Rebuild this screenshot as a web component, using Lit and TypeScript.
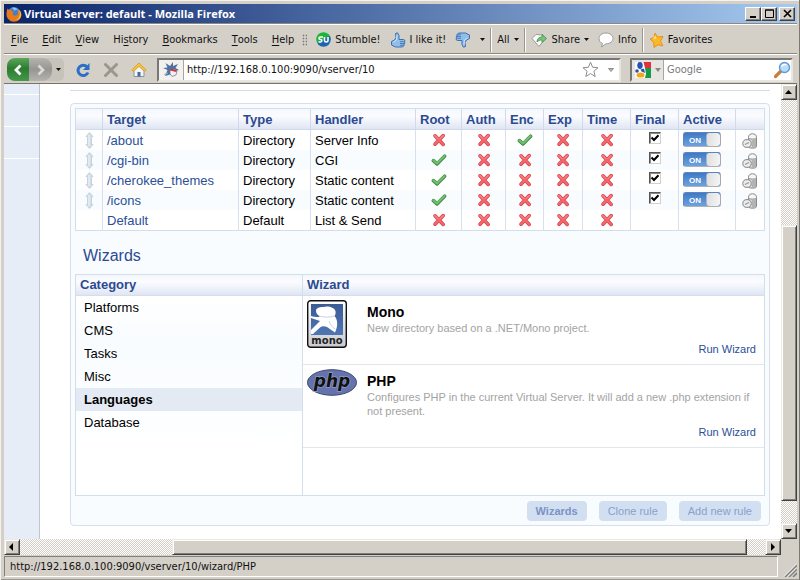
import { LitElement, html, css, svg, nothing } from "lit";
import { customElement, property } from "lit/decorators.js";
import { classMap } from "lit/directives/class-map.js";

interface Rule {
  target: string;
  type: string;
  handler: string;
  flags: boolean[];
  fixed?: boolean;
}

const FLAGS = ["Root", "Auth", "Enc", "Exp", "Time"];

const RULES: Rule[] = [
  { target: "/about", type: "Directory", handler: "Server Info", flags: [false, false, true, false, false] },
  { target: "/cgi-bin", type: "Directory", handler: "CGI", flags: [true, false, false, false, false] },
  { target: "/cherokee_themes", type: "Directory", handler: "Static content", flags: [true, false, false, false, false] },
  { target: "/icons", type: "Directory", handler: "Static content", flags: [true, false, false, false, false] },
  { target: "Default", type: "Default", handler: "List & Send", flags: [false, false, false, false, false], fixed: true },
];

const CATEGORIES = ["Platforms", "CMS", "Tasks", "Misc", "Languages", "Database"];

const MENUS: [string, string, string][] = [
  ["", "F", "ile"],
  ["", "E", "dit"],
  ["", "V", "iew"],
  ["Hi", "s", "tory"],
  ["", "B", "ookmarks"],
  ["", "T", "ools"],
  ["", "H", "elp"],
];

const caret = html`<svg class="caret" width="5" height="3" viewBox="0 0 5 3"><path d="M0 0h5L2.500 3z" fill="#111" /></svg>`;

const thumb = svg`
  <path d="M1.500 9.500 4.500 8 6 5.500 5.500 1.500 7.500.8 9 3.500 9 7.500 13.500 7.500 15 8.500 14.500 9.800 15 11 14 12 14 13.500 12.500 15 5.500 15 1.500 13z" fill="#8fbfe8" stroke="#3f6fae" stroke-linejoin="round" />
  <path d="M10 9.700h4.500M10 11.500h4.500M10 13.300h4" stroke="#4a7fbc" fill="none" />
  <path d="M3.500 10 6.500 8 7 3" stroke="#cfe6fa" fill="none" />`;

const cross = html`<svg class="mark" role="img" aria-label="No" width="14" height="14" viewBox="0 0 14 14">
  <path d="M3 2.800 11.200 11.400M11.200 2.600 3 11.200" stroke="#d8404a" stroke-width="3.600" stroke-linecap="round" />
  <path d="M3 2.800 11.200 11.400M11.200 2.600 3 11.200" stroke="#f2656a" stroke-width="2.400" stroke-linecap="round" />
  <path d="M3 2.500 6 5.600M11 2.500 8.200 5.400" stroke="#fb9596" stroke-width="1" stroke-linecap="round" />
</svg>`;

const check = html`<svg class="mark" role="img" aria-label="Yes" width="16" height="14" viewBox="0 0 16 14">
  <path d="M2.400 7.600 6 10.900 13.600 3.200" fill="none" stroke="#3f8b44" stroke-width="3.500" stroke-linecap="round" stroke-linejoin="round" />
  <path d="M2.400 7.400 6 10.500 13.500 3" fill="none" stroke="#74bf70" stroke-width="2" stroke-linecap="round" stroke-linejoin="round" />
</svg>`;

const drag = html`<svg class="mark" width="9" height="17" viewBox="0 0 9 17">
  <path d="M4.500 .5 8 4.500H6.500v8H8L4.500 16.500 1 12.500h1.500v-8H1z" fill="#d3dfe8" stroke="#bccbd7" stroke-width=".8" />
  <path d="M4 3v11" stroke="#eef4f8" />
</svg>`;

const trash = html`<svg width="16" height="16" viewBox="0 0 16 16">
  <path d="M6.500 4.500C6.500 2 8 .8 10.500 .8S14.500 2 14.500 4.500v9c0 1-1.600 1.700-4 1.700s-4-.7-4-1.700z" fill="#d9d9d9" stroke="#8a8a8a" />
  <path d="M7 4.800C7.200 2.300 8.500 1.500 10.500 1.500S13.800 2.500 14 4.800c-2 1-5 1-7 0z" fill="#f6f6f6" />
  <path d="M6.800 5.500c2 .9 5.500.9 7.500 0" fill="none" stroke="#9a9a9a" />
  <path d="M13 6.500v7.500M11 7v7.500" stroke="#9a9a9a" stroke-width="1.200" />
  <ellipse cx="5" cy="10.500" rx="4.200" ry="3.900" fill="#ececec" stroke="#858585" />
  <path d="M3 11.500 7 9.500" stroke="#999" stroke-width="1.300" />
</svg>`;

@customElement("rule-table")
export class RuleTable extends LitElement {
  static styles = css`
    :host { display: block; }
    .rules { width: 100%; table-layout: fixed; border-collapse: separate; border-spacing: 0; border: 1px solid #d3deeb; font-size: 13px; line-height: 18px; background: #fff; }
    th, td { box-sizing: border-box; }
    th { height: 21px; padding: 2px 4px 0; text-align: left; color: #2b4a91; border-left: 1px solid #d0daea; border-bottom: 1px solid #cfd9e9; background: linear-gradient(#f4f7fc, #fbfcff 35%, #dfe6f3); }
    td { height: 20px; padding: 2px 4px 0; border-left: 1px solid #d6e0ef; color: #000; white-space: nowrap; vertical-align: top; }
    tr > :first-child { border-left: 0; }
    .even td { background: #f8fcff; }
    .mid { text-align: center; padding: 0; vertical-align: middle; }
    .mark { display: block; margin: 0 auto; }
    a { color: #2b4f97; text-decoration: none; }
    .grip { width: 26px; }
    .type { width: 72px; }
    .handler { width: 105px; }
    .root { width: 46px; }
    .auth { width: 44px; }
    .enc { width: 38px; }
    .exp { width: 39px; }
    .time, .final { width: 48px; }
    .active { width: 57px; }
    .del { width: 29px; }
    .tick { display: block; width: 12px; height: 12px; margin: 0 auto 4px; appearance: none; background: #fff; border: 1px solid; border-color: #555 #d4d0c8 #d4d0c8 #555; box-shadow: inset 1px 1px #888; }
    .tickbox { display: block; position: relative; }
    .tickmark { position: absolute; left: 50%; top: 2px; margin-left: -4px; pointer-events: none; }
    .toggle { display: flex; align-items: stretch; width: 38px; height: 15px; box-sizing: border-box; border: 1px solid; border-color: #5c83be #a8a8a8 #b0b0b0 #5c83be; border-radius: 3px; background: linear-gradient(#3f79c4, #6da2e0); overflow: hidden; position: relative; }
    .toggle input { position: absolute; inset: 0; margin: 0; opacity: 0; }
    .on { width: 22px; color: #fff; font-size: 8px; line-height: 15px; font-weight: bold; text-align: center; }
    .knob { flex: 1; border-radius: 3px; border-left: 1px solid #a9b6c8; background: linear-gradient(100deg, #dedede, #f6f6f6); }
    .bin { display: flex; width: 16px; height: 16px; padding: 0; margin: 1px 6px 0; border: 0; background: none; }
  `;

  render() {
    return html`<table class="rules">
      <thead>
        <tr>
          <th class="grip"></th>
          <th>Target</th>
          <th class="type">Type</th>
          <th class="handler">Handler</th>
          ${FLAGS.map((f) => html`<th class=${f.toLowerCase()}>${f}</th>`)}
          <th class="final">Final</th>
          <th class="active">Active</th>
          <th class="del"></th>
        </tr>
      </thead>
      <tbody>
        ${RULES.map(
          (r, i) => html`<tr class=${classMap({ even: i % 2 === 1 })}>
            <td class="mid">${r.fixed ? nothing : drag}</td>
            <td><a href="#">${r.target}</a></td>
            <td>${r.type}</td>
            <td>${r.handler}</td>
            ${r.flags.map((on) => html`<td class="mid">${on ? check : cross}</td>`)}
            <td class="mid">
              ${r.fixed
                ? nothing
                : html`<label class="tickbox">
                    <input class="tick" type="checkbox" checked aria-label="Final: ${r.target}" />
                    <svg class="tickmark" width="8" height="8" viewBox="0 0 8 8"><path d="M.5 3.500 3 6 7.500 1.200" fill="none" stroke="#000" stroke-width="2" /></svg>
                  </label>`}
            </td>
            <td>
              ${r.fixed
                ? nothing
                : html`<label class="toggle">
                    <input type="checkbox" checked aria-label="Active: ${r.target}" />
                    <span class="on">ON</span><span class="knob"></span>
                  </label>`}
            </td>
            <td class="mid">${r.fixed ? nothing : html`<button class="bin" aria-label="Delete ${r.target}">${trash}</button>`}</td>
          </tr>`,
        )}
      </tbody>
    </table>`;
  }
}

@customElement("wizard-picker")
export class WizardPicker extends LitElement {
  @property() selected = "Languages";

  static styles = css`
    :host { display: grid; grid-template-columns: 226px 1fr; min-height: 222px; border: 1px solid #d3deeb; box-sizing: border-box; background: #fff; font-size: 13px; }
    .cats { background: linear-gradient(#fff 20px, #f8fcff 30%, #fff 80%); }
    .pane { border-left: 1px solid #d3deeb; }
    .head { margin: 0; height: 20px; padding: 0 4px; border-bottom: 1px solid #d5deec; font-size: 13px; line-height: 20px; color: #2b4a91; background: linear-gradient(#f4f7fc, #fbfcff 35%, #dfe6f3); }
    .cat { display: block; width: 100%; height: 23px; padding: 0 8px; border: 0; background: none; text-align: left; font: 13px "Liberation Sans", Arial, sans-serif; color: #000; }
    .picked { background: #e4eaf4; font-weight: bold; }
    .wiz { display: grid; grid-template-columns: 60px 1fr; padding: 4px 8px 8px 4px; border-bottom: 1px solid #e2e7ee; }
    .name { margin: 4px 0 0; font-size: 14px; line-height: 17px; color: #000; }
    .desc { margin: 0; font-size: 11px; line-height: 14px; color: #a3a3a3; }
    .run { justify-self: end; grid-column: 2; margin-top: 7px; font-size: 11px; line-height: 14px; color: #2b4f97; text-decoration: none; }
    .logo { grid-row: span 2; display: block; }
    .mono-text { font: bold 10px "DejaVu Sans", sans-serif; }
    .php-text { font: italic bold 17px "DejaVu Sans", sans-serif; }
  `;

  render() {
    return html`
      <div class="cats">
        <h3 class="head">Category</h3>
        ${CATEGORIES.map((c) => html`<button class=${classMap({ cat: true, picked: c === this.selected })}>${c}</button>`)}
      </div>
      <div class="pane">
        <h3 class="head">Wizard</h3>
        <article class="wiz">
          <svg class="logo" width="40" height="48" viewBox="0 0 40 48">
            <defs><linearGradient id="m" x2="0" y2="1"><stop stop-color="#fff" /><stop offset="1" stop-color="#c9cbd0" /></linearGradient>
            <linearGradient id="b" x2="0" y2="1"><stop stop-color="#3b5b95" /><stop offset="1" stop-color="#4f76b4" /></linearGradient></defs>
            <rect x=".7" y=".7" width="38.600" height="46.600" rx="3" fill="url(#m)" stroke="#111" stroke-width="1.400" />
            <rect x="4" y="4" width="32" height="31" fill="url(#b)" />
            <path d="M9 11C9 8 12 7 16 7c5-1.500 11 0 12.500 4 .5 3-.5 4-1 5 3 3 3.500 9 1.500 14l-1 2.500-8-5.500c-3-1-5-1-7 .500L6 34H4v-4l9-9-9-3v-2c3 1 6 1.500 9 .500-2-1-4-3-4-5.500z" fill="#fff" />
            <path d="M12 16c5 1.500 11 1.500 15 0M22 21c1 3 3 6 6 8" fill="none" stroke="#b9c6dc" stroke-width=".8" />
            <text class="mono-text" x="20" y="44" text-anchor="middle" fill="#222">mono</text>
          </svg>
          <div><h4 class="name">Mono</h4><p class="desc">New directory based on a .NET/Mono project.</p></div>
          <a class="run" href="#">Run Wizard</a>
        </article>
        <article class="wiz">
          <svg class="logo" width="50" height="27" viewBox="0 0 50 27">
            <ellipse cx="25" cy="13.500" rx="24.500" ry="12.800" fill="#6473ab" stroke="#3d4778" />
            <text class="php-text" x="25" y="18" text-anchor="middle" fill="#111" stroke="#8f9bc8" stroke-width="1.500" paint-order="stroke">php</text>
          </svg>
          <div><h4 class="name">PHP</h4><p class="desc">Configures PHP in the current Virtual Server. It will add a new .php extension if not present.</p></div>
          <a class="run" href="#">Run Wizard</a>
        </article>
      </div>`;
  }
}

@customElement("app-root")
export class AppRoot extends LitElement {
  static styles = css`
    :host { display: flex; flex-direction: column; box-sizing: border-box; min-height: 100vh; padding: 4px 2px 3px 4px; background: #d4d0c8; border-right: 1px solid #7b7974; box-shadow: inset 1px 1px #f4f2ee, inset 0 -1px #9a978f; font-family: "Liberation Sans", Arial, sans-serif; color: #111; }
    svg { display: block; flex: none; }
    button { font: inherit; color: inherit; }
    .chrome { font-family: "DejaVu Sans Condensed", "DejaVu Sans", sans-serif; font-size: 11px; font-stretch: condensed; }
    .title { display: flex; align-items: center; height: 19px; padding: 0 2px; background: linear-gradient(90deg, #0a246a, #a6caf0); color: #fff; }
    .title h1 { flex: 1; margin: 0 0 0 2px; font: bold 11px "Open Sans", sans-serif; line-height: 18px; }
    .win { width: 16px; height: 14px; padding: 0; display: grid; place-items: center; border: 1px solid; border-color: #fff #404040 #404040 #fff; background: #d4d0c8; box-shadow: inset -1px -1px #808080; }
    .close { margin-left: 2px; }
    .bar { display: flex; align-items: center; box-sizing: border-box; height: 30px; padding-top: 2px; border-top: 1px solid #8c8981; box-shadow: inset 0 1px #fff; }
    .menu { display: flex; gap: 14px; padding: 0 8px 0 7px; }
    .menu button, .tool { display: flex; align-items: center; gap: 4px; border: 0; padding: 0; background: none; white-space: nowrap; }
    .menu button { gap: 0; }
    .menu u { text-underline-offset: 2px; }
    .grip { width: 5px; height: 12px; margin-right: 9px; background: radial-gradient(circle, #777 40%, transparent 50%) 0 0 / 3px 3px; }
    .tools { display: flex; align-items: center; gap: 9px; }
    .sep { width: 1px; height: 24px; background: #98958d; border-right: 1px solid #fff; }
    .snug { margin: 0 -4px; }
    .nav { height: 30px; padding-left: 3px; }
    .round { display: flex; width: 57px; height: 23px; background: #c6c3bb; border-radius: 8px 5px 5px 8px; overflow: hidden; }
    .round button { padding: 0; border: 0; display: grid; place-items: center; }
    .back { width: 22px; background: linear-gradient(#5ba65c, #2b7d30 45%, #43994a); }
    .fwd { width: 23px; background: linear-gradient(#b5b3ae, #989692 50%, #b5b3ae); border-radius: 0 9px 9px 0; }
    .hist { width: 12px; background: none; }
    .icons { display: flex; gap: 12px; margin: 0 10px 0 11px; }
    .icons button { padding: 0; border: 0; background: none; }
    .field { display: flex; align-items: center; box-sizing: border-box; height: 24px; border: 2px solid; border-color: #777 #e8e6e1 #e8e6e1 #777; background: #fff; }
    .url { flex: 1; }
    .search { width: 163px; margin: 0 4px 0 9px; }
    .site { display: grid; place-items: center; align-self: stretch; width: 24px; background: #f2f1ee; border-right: 1px solid #a9a69f; }
    .engine { display: flex; align-items: center; justify-content: center; gap: 4px; align-self: stretch; width: 32px; padding: 0; border: 0; border-right: 1px solid #a9a69f; background: #e6e4df; }
    .field input { flex: 1; min-width: 0; border: 0; padding: 0 3px; outline: 0; background: none; font: inherit; color: #111; }
    .search input::placeholder { color: #7b7b7b; opacity: 1; }
    .star { margin-right: 9px; }
    .drop { margin-right: 5px; }
    .view { flex: 1; display: grid; grid-template-columns: 1fr 16px; grid-template-rows: 1fr 16px; border-top: 1px solid #77746d; }
    .page { display: grid; grid-template-columns: 36px 1fr; background: #fff; overflow: hidden; }
    .side { border-right: 1px solid #bfc6d2; background: #e6edf6; }
    .slot { height: 31px; border-bottom: 1px solid #fff; }
    .first { height: 10px; }
    .main { padding: 6px 11px 12px 30px; }
    .rule { height: 0; margin: 0 0 12px; border: 0; border-top: 1px solid #d9dee6; }
    .panel { padding: 4px; border: 1px solid #d7e0ea; border-radius: 4px; background: #f8fcff; }
    .panel h2 { margin: 15px 8px 8px; font-size: 16px; line-height: 20px; font-weight: normal; color: #2b4a91; }
    .acts { display: flex; justify-content: flex-end; gap: 12px; padding: 5px 4px 0; }
    .acts button { height: 20px; padding: 0 9px; border: 0; border-radius: 4px; background: #d2dff1; color: #8ba0cb; font: 11px "Liberation Sans", Arial, sans-serif; }
    .acts .strong { font-weight: bold; color: #7b93c4; }
    .sb { display: flex; background: repeating-conic-gradient(#fff 0 25%, #d4d0c8 0 50%) 0 0 / 2px 2px; }
    .vert { flex-direction: column; }
    .sb button, .thumb { box-sizing: border-box; border: 1px solid; border-color: #eceae5 #404040 #404040 #eceae5; box-shadow: inset 1px 1px #fff, inset -1px -1px #808080; background: #d4d0c8; padding: 0; }
    .sb button { flex: 0 0 16px; display: grid; place-items: center; }
    .lead-v { flex: 126; }
    .thumb-v { flex: 275; }
    .tail-v { flex: 22; }
    .lead-h { flex: 152; }
    .thumb-h { flex: 575; }
    .tail-h { flex: 18; }
    .status { display: flex; align-items: stretch; height: 21px; padding-top: 1px; }
    .msg { flex: 1; padding: 0 5px; line-height: 20px; border: 1px solid; border-color: #808080 #fff #fff #808080; }
    .size { align-self: flex-end; margin-left: 5px; }
  `;

  private arrow(label: string, d: string) {
    return html`<button aria-label=${label}><svg width="8" height="8" viewBox="0 0 8 8"><path d=${d} fill="#000" /></svg></button>`;
  }

  render() {
    return html`
      <header class="chrome">
        <div class="title">
          <svg width="16" height="16" viewBox="0 0 16 16">
            <circle cx="8" cy="7.500" r="6.500" fill="#3d7fd0" />
            <path d="M6 2c2-1 5 0 6 2-2-.5-3 0-3 1z" fill="#8fc4f0" />
            <path d="M1.500 2.500 3 4l2-1 .5 2L8 6 6.500 7.500C7 10 10 10 11.500 8.500c1-1.500.5-3.500-.5-5 3 1 4.500 3.500 4.300 6C14.800 13 12 15.700 8 15.700S.5 12.500.5 8.500C.5 6 1 4 1.500 2.500z" fill="#e8791c" />
            <path d="M12 3.500c3 3 2.500 8-2 10.500 4-.5 5.800-3.500 5-7-.4-2-1.500-3-3-3.500z" fill="#f9c440" />
          </svg>
          <h1>Virtual Server: default - Mozilla Firefox</h1>
          <button class="win" aria-label="Minimize"><svg width="9" height="9" viewBox="0 0 9 9"><path d="M1 7h6v2H1z" /></svg></button>
          <button class="win" aria-label="Maximize"><svg width="9" height="9" viewBox="0 0 9 9"><path d="M.5 1h8v7.500h-8zM0 1h9" fill="none" stroke="#000" /></svg></button>
          <button class="win close" aria-label="Close"><svg width="9" height="9" viewBox="0 0 9 9"><path d="m1 1 7 7M8 1 1 8" stroke="#000" stroke-width="1.600" /></svg></button>
        </div>
        <div class="bar">
          <nav class="menu">${MENUS.map(([a, k, b]) => html`<button>${a}<u>${k}</u>${b}</button>`)}</nav>
          <span class="grip"></span>
          <div class="tools">
            <button class="tool">
              <svg width="15" height="15" viewBox="0 0 15 15"><defs><linearGradient id="su" x1=".2" x2=".8" y2="1"><stop offset=".45" stop-color="#1fb53a" /><stop offset=".55" stop-color="#1c63b0" /></linearGradient></defs>
                <circle cx="7.500" cy="7.500" r="7.300" fill="url(#su)" />
                <path d="M7 5H4.500C2.500 5 2.500 7.500 4.500 7.500S6 10 4.500 10H2.500M8.500 5v3.500C8.500 10.500 12 10.500 12 8.500V5" fill="none" stroke="#fff" stroke-width="1.600" />
              </svg>Stumble!</button>
            <button class="tool"><svg width="16" height="16" viewBox="0 0 16 16">${thumb}</svg>I like it!</button>
            <button class="tool" aria-label="Dislike"><svg width="16" height="16" viewBox="0 0 16 16"><g transform="rotate(180 8 8)">${thumb}</g></svg></button>
            ${caret}
            <span class="sep snug"></span>
            <button class="tool">All ${caret}</button>
            <span class="sep snug"></span>
            <button class="tool">
              <svg width="17" height="16" viewBox="0 0 17 16"><path d="M1 6.500 5 2.500l7 .5 2 4-6 7.500z" fill="#fafafa" stroke="#999" /><path d="M6 10c0-3 2-5 5-5V2.500l4.500 4-4.500 4V8c-2 0-3.500.5-5 2z" fill="#7cc47c" stroke="#3f8f4a" stroke-width=".8" /></svg>
              Share ${caret}</button>
            <button class="tool">
              <svg width="16" height="16" viewBox="0 0 16 16"><path d="M8 1C4 1 1 3.300 1 6.500c0 2.400 1.500 4.200 3.500 5L3.500 15l4.500-3.200c4 0 7-2.200 7-5.300S12 1 8 1z" fill="#fff" stroke="#9b9b9b" /></svg>
              Info</button>
            <span class="sep snug"></span>
            <button class="tool">
              <svg width="15" height="16" viewBox="0 0 15 16"><path d="M6 1l2.500 4L14 4.500l-2.500 4.700L14 14l-5-1.300L5 15.500 4.800 10.500 1 7l4-1.500z" fill="#fdb823" stroke="#e0951f" stroke-linejoin="round" /><path d="M6 3.500 7.500 6.500 4 7" fill="#ffe587" /></svg>
              Favorites</button>
          </div>
        </div>
        <div class="bar nav">
          <div class="round">
            <button class="back" aria-label="Back"><svg width="10" height="12" viewBox="0 0 10 12"><path d="M7.500 1.500 3 6l4.500 4.500" fill="none" stroke="#fff" stroke-width="2.800" /></svg></button>
            <button class="fwd" aria-label="Forward"><svg width="10" height="12" viewBox="0 0 10 12"><path d="M2.500 1.500 7 6l-4.500 4.500" fill="none" stroke="#dcdad6" stroke-width="2.600" /></svg></button>
            <button class="hist" aria-label="History">${caret}</button>
          </div>
          <div class="icons">
            <button aria-label="Reload"><svg width="16" height="16" viewBox="0 0 16 16"><path d="M12 4.800A5.200 5.200 0 1 0 13 10.500" fill="none" stroke="#2c6fc9" stroke-width="3" /><path d="M14.500 1v7H8z" fill="#2c6fc9" /></svg></button>
            <button aria-label="Stop"><svg width="16" height="16" viewBox="0 0 16 16"><path d="m2.500 2.500 11 11M13.500 2.500l-11 11" stroke="#9a978f" stroke-width="3" stroke-linecap="round" /></svg></button>
            <button aria-label="Home"><svg width="16" height="16" viewBox="0 0 16 16"><path d="M3 8v6.500h10V8L8 3.500z" fill="#f2f4f8" stroke="#8b93a0" /><path d="M8 1 .8 8l1.500 1.500L8 4.500l5.700 5L15.200 8z" fill="#f8c13a" stroke="#d79b22" stroke-width=".8" /><path d="M6.500 10h3v4.500h-3z" fill="#3f6ea8" /></svg></button>
          </div>
          <div class="field url">
            <span class="site"><svg width="18" height="17" viewBox="0 0 18 17"><path d="M3 15 5.500 9 1 7l4.500-.5L3.500 2 8 5l3-4v4l5-2-2.500 4L17 9l-4 1-2 5-3-1.500z" fill="#50709f" /><path d="M8 9.500 12 8l3 2-1 4-4 1.500-2-2.500z" fill="#eef0f5" stroke="#67728a" stroke-width=".7" /><path d="M9 7.500 15 9.500l-1 1.500-5.500-1.500z" fill="#d6303a" /><path d="M2 13.500 6 12" stroke="#9db3d3" /></svg></span>
            <input aria-label="Address" value="http://192.168.0.100:9090/vserver/10" />
            <svg class="star" width="17" height="17" viewBox="0 0 17 17"><path d="m8.500 1.200 2.100 5 5.400.5-4.100 3.500 1.300 5.300-4.700-2.900-4.700 2.900 1.300-5.300L1 6.700l5.400-.5z" fill="#fff" stroke="#8c8c8c" /></svg>
            <svg class="drop" width="6" height="4" viewBox="0 0 6 4"><path d="M.5 .5h5L3 3.500z" fill="#bbb" stroke="#777" stroke-width=".8" /></svg>
          </div>
          <div class="field search">
            <button class="engine" aria-label="Search engine">
              <svg width="16" height="16" viewBox="0 0 16 16"><path d="M0 0h16v16H0z" fill="#fff" /><path d="M8.500 0H16v6H10z" fill="#e0323a" /><path d="M10 6h6v10h-6l1-4z" fill="#199a49" /><ellipse cx="5" cy="3.500" rx="2.700" ry="3.400" fill="#2453b4" /><circle cx="2" cy="9" r="1.800" fill="#2453b4" /><path d="M5.500 7.500 9 6.500 10 11 6.500 9.500z" fill="#2453b4" /><ellipse cx="5.500" cy="13" rx="4" ry="2.600" fill="#f2a81d" /></svg>
              <svg width="6" height="4" viewBox="0 0 6 4"><path d="M0 0h6L3 4z" fill="#888" /></svg>
            </button>
            <input aria-label="Search" placeholder="Google" />
            <svg width="18" height="18" viewBox="0 0 18 18"><path d="M8.500 9.500 2.500 15.500" stroke="#c87f3a" stroke-width="3.200" stroke-linecap="round" /><circle cx="11.500" cy="6.500" r="5" fill="#b9defa" stroke="#5f9ad6" stroke-width="1.400" /><path d="M8.500 5.500c1-2 3-2.500 5-1.500" fill="none" stroke="#fff" stroke-width="1.400" /></svg>
          </div>
        </div>
      </header>
      <div class="view">
        <div class="page">
          <aside class="side"><div class="slot first"></div><div class="slot"></div><div class="slot"></div></aside>
          <main class="main">
            <hr class="rule" />
            <section class="panel">
              <rule-table></rule-table>
              <h2>Wizards</h2>
              <wizard-picker></wizard-picker>
              <div class="acts">
                <button class="strong">Wizards</button><button>Clone rule</button><button>Add new rule</button>
              </div>
            </section>
          </main>
        </div>
        <div class="sb vert">
          ${this.arrow("Scroll up", "M0 6h7L3.500 2z")}
          <span class="lead-v"></span><span class="thumb thumb-v"></span><span class="tail-v"></span>
          ${this.arrow("Scroll down", "M0 2h7L3.500 6z")}
        </div>
        <div class="sb">
          ${this.arrow("Scroll left", "M5 0v8L1 4z")}
          <span class="lead-h"></span><span class="thumb thumb-h"></span><span class="tail-h"></span>
          ${this.arrow("Scroll right", "M2 0v8l4-4z")}
        </div>
      </div>
      <footer class="status chrome">
        <span class="msg">http://192.168.0.100:9090/vserver/10/wizard/PHP</span>
        <svg class="size" width="14" height="14" viewBox="0 0 14 14"><path d="M2 14 14 2M6 14l8-8M10 14l4-4" stroke="#808080" stroke-width="1.600" /><path d="M1 13.500 13.500 1M5 13.500 13.500 5" stroke="#fff" stroke-width=".8" /></svg>
      </footer>
    `;
  }
}
